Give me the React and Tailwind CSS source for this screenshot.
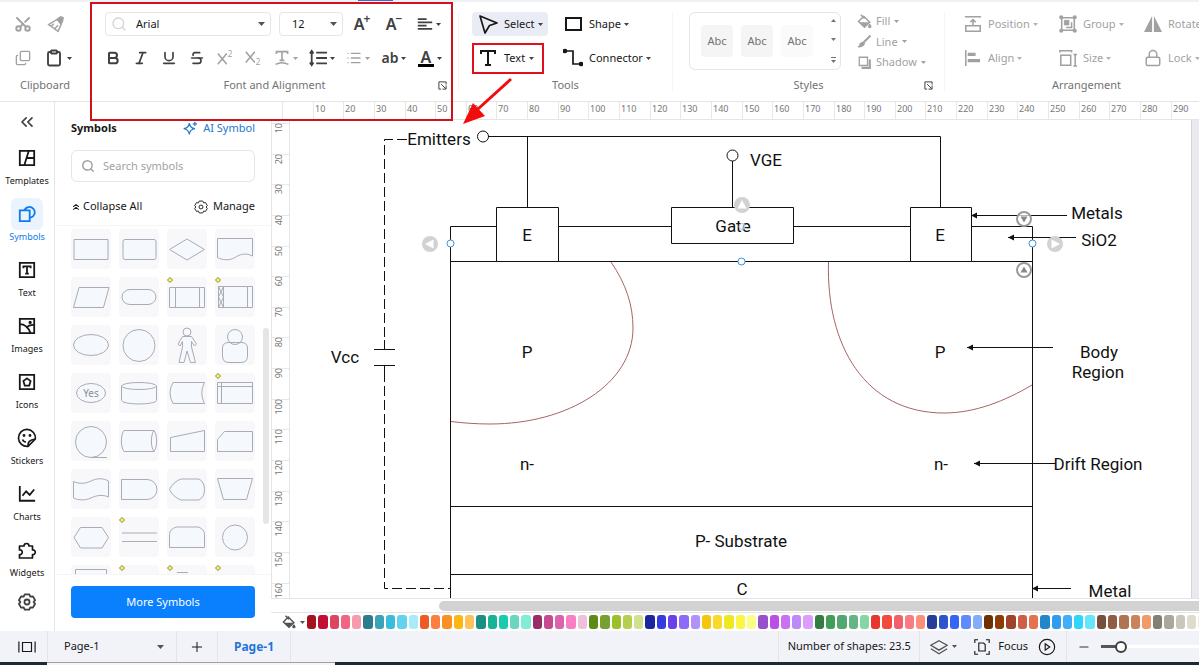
import React, { useState } from 'react';
import {
  Bold, ChevronsLeft, ChevronsUp, Clipboard, Copy, Italic, List, Lock,
  Minus, Plus, Scissors, Search, Strikethrough, Underline,
} from 'lucide-react';

const NAV = ['Templates', 'Symbols', 'Text', 'Images', 'Icons', 'Stickers', 'Charts', 'Widgets'];

const SWATCHES = [
  '#a5131f', '#c40d33', '#dd4663', '#ef6583', '#f79cae', '#2b7d8d', '#3ba2b8', '#3abddb', '#61d3ec', '#a9ebfa',
  '#ee5a26', '#fb803f', '#f89122', '#fdb713', '#fcc35c', '#1a8f82', '#17b395', '#19cbae', '#6ad6bf', '#82ecd4',
  '#972f66', '#c54a8e', '#dc62ac', '#f87fc4', '#efbfde', '#5c8a16', '#76a02f', '#9cbf2c', '#b5cf50', '#d1e18b',
  '#1c269e', '#353bdc', '#6a40ea', '#8d6af8', '#b192fb', '#f5c60c', '#f9da2c', '#ece91e', '#fbf544', '#fbff84',
  '#9650cc', '#bb50e6', '#ca70f2', '#be88fa', '#dc9efc', '#317d42', '#409e56', '#52a672', '#64b486', '#86d6a4',
  '#e8352f', '#f24a3c', '#f0616a', '#fb7a84', '#fd8e7e', '#273e98', '#2e54cc', '#3565f2', '#5f8bfc', '#84adf8',
  '#6d3000', '#8c3a06', '#9e432c', '#cc5f46', '#e47250', '#2287ca', '#2f9cf2', '#43aef8', '#2ed6fc', '#66e6fa',
  '#774f3c', '#905c44', '#ad7352', '#cc835c', '#f09a6a', '#827f74', '#aaa89c', '#cbc8bb', '#dfdccd', '#f2ecd6',
];

// Stencils, each drawn in a 40 x 40 tile
const SHAPES = [
  { d: 'M3 10.5H37V30.5H3Z' },
  { d: 'M6 10.5H35Q37 10.5 37 12.5V28.5Q37 30.5 35 30.5H6Q4 30.5 4 28.5V12.5Q4 10.5 6 10.5Z' },
  { d: 'M20 10L37.500 20.500L20 31L2.500 20.500Z' },
  { d: 'M2.500 9.500H37.500V27C30 23 24 26 20 28.500C14 32 7 31 2.500 28.500Z' },
  { d: 'M8 10.500H38L32.500 30.500H2.500Z' },
  { d: 'M11 12.500H29A8 7.500 0 0 1 29 27.500H11A8 7.500 0 0 1 11 12.500Z' },
  { d: 'M2.500 10.500H37.500V30.500H2.500ZM8.500 10.500V30.500M32.500 10.500V30.500', mark: true },
  { d: 'M3.500 9.500H37.500V30.500H3.500ZM8.500 9.500V30.500M32.500 9.500V30.500M3.500 9.500L8.500 20L3.500 30.500M8.500 9.500L3.500 20L8.500 30.500', mark: true },
  { d: 'M2.500 20A17.500 10.500 0 0 1 37.500 20A17.500 10.500 0 0 1 2.500 20Z' },
  { d: 'M4 20.500A16 16 0 0 1 36 20.500A16 16 0 0 1 4 20.500Z' },
  { d: 'M16 7A4 4 0 0 1 24 7A4 4 0 0 1 16 7ZM15.500 11.500H24.500L29.500 19L27.500 21L24.500 16.500V22L28.500 37.500H23.500L20 26L17 37.500H12L15.500 22V16.500L13 21L11 19Z' },
  { d: 'M13 17.500H27Q32.500 18 32.500 23V31Q32.500 37.500 26 37.500H14Q7.500 37.500 7.500 31V23Q7.500 18 13 17.500ZM12.500 12A7.500 7.500 0 0 1 27.500 12A7.500 7.500 0 0 1 12.500 12Z' },
  { d: 'M5.500 20A14.500 9.500 0 0 1 34.500 20A14.500 9.500 0 0 1 5.500 20Z', label: 'Yes' },
  { d: 'M2.500 13A17.500 3.500 0 0 1 37.500 13V27.500A17.500 3.500 0 0 1 2.500 27.500ZM2.500 13A17.500 3.500 0 0 0 37.500 13' },
  { d: 'M6 9.500H37.500Q32 20 37.500 30.500H6Q0 20 6 9.500Z' },
  { d: 'M2.500 9.500H37.500V30.500H2.500ZM2.500 13.500H37.500M6.500 9.500V30.500', mark: true },
  { d: 'M20 36.500A15.500 15.500 0 1 1 20 5.500A15.500 15.500 0 0 1 20 36.500H36' },
  { d: 'M5 9.500H35C38.500 14 38.500 26 35 30.500H5C1.500 26 1.500 14 5 9.500ZM35 9.500C31.500 14 31.500 26 35 30.500' },
  { d: 'M3.500 16.500L37.500 9.500V30.500H3.500Z' },
  { d: 'M9.500 10.500H37.500V30.500H2.500V18.500Z' },
  { d: 'M2.500 12.500C8 15 14 15 20 12C26 9 32 9 37.500 12V28C32 25.500 26 26 20 29C14 31.500 8 31.500 2.500 29Z' },
  { d: 'M2.500 10.500H28A10 10 0 0 1 28 30.500H2.500Z' },
  { d: 'M14 10H32Q37.500 13 37.500 20.500Q37.500 28 32 31H14Q6 28 2.500 20.500Q6 13 14 10Z' },
  { d: 'M2.500 9.500H37.500L31.500 30.500H8.500Z' },
  { d: 'M9.500 10.500H31L37.500 20.500L31 31H9.500L3 20.500Z' },
  { d: 'M3 16H38M3 24.500H38', mark: true },
  { d: 'M9.500 10H31Q37.500 12 37.500 17.500V30.500H2.500V17.500Q2.500 12 9.500 10Z' },
  { d: 'M7.500 20.500A12.500 12.500 0 0 1 32.500 20.500A12.500 12.500 0 0 1 7.500 20.500Z' },
  { d: 'M4.500 4.500H35.500V34H4.500Z' },
  { d: 'M3 16H37', mark: true },
  { d: 'M10 7.500H21M3 16H37', mark: true },
  { d: 'M3 16H37', mark: true },
];

function Caret({ className = '' }) {
  return (
    <svg viewBox="0 0 5 3" className={`h-[3px] w-[5px] shrink-0 ${className}`} fill="currentColor" aria-hidden="true">
      <path d="M0 0h5L2.500 3z" />
    </svg>
  );
}

function SelectArrow({ className = '' }) {
  return (
    <svg viewBox="0 0 7 4" className={`pointer-events-none h-1 w-[7px] shrink-0 text-neutral-600 ${className}`} fill="currentColor" aria-hidden="true">
      <path d="M0 0h7L3.500 4z" />
    </svg>
  );
}

function Icon({ className = 'size-5', children }) {
  return (
    <svg viewBox="0 0 20 20" className={`shrink-0 ${className}`} fill="none" stroke="currentColor" strokeWidth="1.700" aria-hidden="true">
      {children}
    </svg>
  );
}

const Launcher = () => (
  <button aria-label="More options" className="text-neutral-700">
    <Icon className="size-[9px]">
      <path d="M7 18H2V2h16v6M7 7l10 10M18 10v8h-8" strokeWidth="2.200" />
    </Icon>
  </button>
);

const BucketIcon = ({ className }) => (
  <Icon className={className}>
    <path d="M9 3l8 8-7 6.500-8-7.500zM5 1l5 5" strokeWidth="2" />
    <path d="M3 11h13l-6 6z" fill="currentColor" stroke="none" />
    <path d="M17 14q3 4 0 4t0-4" fill="currentColor" />
  </Icon>
);

const GearIcon = ({ className, strokeWidth }) => (
  <Icon className={className}>
    <g strokeWidth={strokeWidth} strokeLinejoin="round">
      <path d="M7.500 1.500h5l1.200 2.600 2.900-.3L19 8l-1.700 2 1.700 2-2.400 4.200-2.900-.3-1.200 2.600h-5l-1.200-2.600-2.900.3L1 12l1.700-2L1 8l2.400-4.200 2.900.3z" />
      <circle cx="10" cy="10" r="2.800" />
    </g>
  </Icon>
);

function Section({ label, launcher, className = '', children }) {
  return (
    <section className={`relative flex shrink-0 flex-col pt-2.5 ${className}`}>
      {children}
      <h2 className="mt-[7px] text-center text-[11px] leading-4 text-neutral-500">{label}</h2>
      {launcher && <div className="absolute right-[11px] bottom-[11px] flex"><Launcher /></div>}
    </section>
  );
}

const Divider = () => <div className="my-2.5 w-px shrink-0 bg-neutral-100" />;

function IconButton({ label, muted, caret, className = 'w-7', children }) {
  return (
    <button
      aria-label={label}
      className={`flex h-6 shrink-0 items-center justify-center gap-[3px] ${caret ? 'w-9 pl-0.5' : className} ${muted ? 'text-neutral-400' : 'text-neutral-700'}`}
    >
      {children}
      {caret && <Caret />}
    </button>
  );
}

function ToolButton({ label, icon, className = '' }) {
  return (
    <button className={`flex h-6 items-center gap-1.5 ${className}`}>
      {icon}
      <span className="flex items-center gap-[3px]">{label}<Caret className="opacity-80" /></span>
    </button>
  );
}

function Ribbon() {
  return (
    <header className="flex h-[100px] shrink-0 overflow-hidden border-b border-neutral-200 bg-white">
      <Section label="Clipboard" className="w-[90px]">
        <div className="flex flex-col gap-2.5 pl-[7px]">
          <div className="flex">
            <IconButton label="Cut" muted className="w-8"><Scissors className="size-[18px] rotate-270" strokeWidth={2.5} /></IconButton>
            <IconButton label="Format painter" muted className="w-8">
              <Icon className="size-[17px]"><path d="M12 4l5 5-4 9L2 10zM5 12l3-3M9 15l4-4" /><path d="M12 4l4-3 3 1-1 5-2 2z" fill="currentColor" /></Icon>
            </IconButton>
          </div>
          <div className="flex">
            <IconButton label="Copy" muted className="w-8"><Copy className="size-4 -scale-y-100" /></IconButton>
            <button aria-label="Paste" className="flex h-6 items-center gap-1 pl-1.5 text-neutral-700"><Clipboard className="size-[18px]" strokeWidth={2.5} /><Caret /></button>
          </div>
        </div>
      </Section>
      <Divider />
      <Section label="Font and Alignment" launcher className="w-[367px]">
        <div className="flex flex-col gap-2.5">
          <div className="flex items-center pl-3.5">
            <label className="relative mr-2 flex h-6 w-[166px] items-center rounded border border-neutral-200">
              <Search className="ml-[5px] size-4 text-neutral-300" />
              <select aria-label="Font" className="absolute inset-0 appearance-none pl-[30px]"><option>Arial</option></select>
              <SelectArrow className="mr-[5px] ml-auto" />
            </label>
            <label className="relative mr-[3px] flex h-6 w-16 items-center rounded border border-neutral-200">
              <select aria-label="Font size" className="absolute inset-0 appearance-none pl-3"><option>12</option></select>
              <SelectArrow className="mr-[5px] ml-auto" />
            </label>
            <IconButton label="Increase font size" className="w-8"><span className="text-base leading-6 font-semibold">A</span><span className="-ml-1 -mt-2.5 text-xs font-semibold">+</span></IconButton>
            <IconButton label="Decrease font size" className="w-8"><span className="text-base leading-6 font-semibold">A</span><span className="-ml-1 -mt-2.5 text-xs font-semibold">−</span></IconButton>
            <IconButton label="Align text" caret>
              <Icon className="size-4"><path d="M1 4h11M1 8h18M1 12h11M1 16h18" strokeWidth="2.200" /></Icon>
            </IconButton>
          </div>
          <div className="flex items-center pl-2">
            <IconButton label="Bold"><Bold className="size-4" strokeWidth={3} /></IconButton>
            <IconButton label="Italic"><Italic className="size-4" strokeWidth={2.5} /></IconButton>
            <IconButton label="Underline"><Underline className="size-4" strokeWidth={2.5} /></IconButton>
            <IconButton label="Strikethrough"><Strikethrough className="size-4" strokeWidth={2.5} /></IconButton>
            <IconButton label="Superscript" muted>
              <Icon className="size-[18px] overflow-visible"><path d="M2 5l10 12M12 5L2 17" /><text x="13" y="9" fontSize="9" fill="currentColor" stroke="none">2</text></Icon>
            </IconButton>
            <IconButton label="Subscript" muted>
              <Icon className="size-[18px] overflow-visible"><path d="M2 3l10 12M12 3L2 15" /><text x="13" y="18" fontSize="9" fill="currentColor" stroke="none">2</text></Icon>
            </IconButton>
            <IconButton label="Text direction" muted caret>
              <Icon className="size-4"><path d="M3 5V2h14v3M10 2v11M7 13h6M2 18q8-4 16 0" strokeWidth="2" /></Icon>
            </IconButton>
            <IconButton label="Line spacing" caret>
              <Icon className="size-[18px]"><path d="M8 4h12M8 10h12M8 16h12M3 3v14M1 5l2-3 2 3M1 15l2 3 2-3" strokeWidth="2" /></Icon>
            </IconButton>
            <IconButton label="Bullets" muted caret><List className="size-4" /></IconButton>
            <IconButton label="Text case" caret><span className="text-sm leading-6 font-semibold">ab</span></IconButton>
            <IconButton label="Font color" caret>
              <span className="flex h-[17px] w-4 items-center justify-center border-b-[3px] border-black text-base font-semibold">A</span>
            </IconButton>
          </div>
        </div>
      </Section>
      <Divider />
      <Section label="Tools" className="w-[213px]">
        <div className="grid h-[58px] grid-cols-[85px_1fr] items-center gap-y-2.5 pl-[13px]">
          <ToolButton label="Select" className="w-[76px] rounded bg-[#e9ecf5] pl-1.5" icon={<Icon><path d="M2 2l17 7-7.500 2.500L7 19z" strokeLinejoin="round" /></Icon>} />
          <ToolButton label="Shape" className="pl-1.5" icon={<Icon><path d="M3 4h15v12H3z" strokeWidth="2" /></Icon>} />
          <button className="-my-1 flex h-[31px] w-[72px] items-center gap-1.5 border-2 border-[#e0101c] pl-1">
            <Icon><path d="M3 6V3h14v3M10 3v14M7 17h6" strokeWidth="2" /></Icon>
            <span className="flex items-center gap-1">Text<Caret className="opacity-80" /></span>
          </button>
          <ToolButton label="Connector" className="pl-1.5" icon={<Icon><circle cx="2" cy="3" r="1.500" fill="currentColor" /><circle cx="18" cy="16" r="1.500" fill="currentColor" /><path d="M4 3h6v13h7" /></Icon>} />
        </div>
      </Section>
      <Divider />
      <Section label="Styles" launcher className="w-[271px]">
        <div className="flex h-[58px] pl-4">
          <div className="flex h-[58px] w-[152px] items-center gap-2 rounded-md border border-neutral-200 pl-[11px]">
            <button className="size-8 rounded bg-neutral-100 text-neutral-500">Abc</button>
            <button className="size-8 rounded bg-neutral-100 text-neutral-500">Abc</button>
            <button className="size-8 rounded bg-neutral-50 text-neutral-500">Abc</button>
            <div className="ml-1.5 flex flex-col gap-4 pl-1 text-neutral-500">
              <button aria-label="Previous styles"><Caret className="rotate-180" /></button>
              <button aria-label="Next styles"><Caret /></button>
              <button aria-label="All styles" className="border-t border-neutral-500 pt-0.5"><Caret /></button>
            </div>
          </div>
          <div className="ml-4 flex flex-col justify-between pt-px leading-4 text-neutral-400">
            <button className="flex items-center gap-1"><BucketIcon className="size-[15px]" />Fill<Caret /></button>
            <button className="flex items-center gap-1">
              <Icon className="size-[15px]"><path d="M18 2L9 11" strokeWidth="2.500" /><path d="M9 11q2 3-2 5t-5 1q2-1 2-3t5-3z" fill="currentColor" /></Icon>Line<Caret />
            </button>
            <button className="flex items-center gap-1">
              <Icon className="size-[15px]"><path d="M3 3h11v11H3z" /><path d="M17 6v11H6" strokeWidth="3" /></Icon>Shadow<Caret />
            </button>
          </div>
        </div>
      </Section>
      <Divider />
      <Section label="Arrangement" className="w-[283px]">
        <div className="grid grid-cols-[95px_85px_1fr] gap-y-2.5 pl-[19px] whitespace-nowrap text-neutral-400">
          <ToolButton label="Position" icon={<Icon className="size-[18px]"><path d="M1 2h18M2 12h16v6H2zM10 12V5M7 8l3-3 3 3" /></Icon>} />
          <ToolButton label="Group" icon={<Icon className="size-[18px]"><path d="M3 3h14v14H3z" /><path d="M1 1h3v3H1zM16 1h3v3h-3zM1 16h3v3H1zM16 16h3v3h-3zM6 6h5v5H6z" fill="currentColor" strokeWidth="1" /><path d="M8 14h6V8" /></Icon>} />
          <ToolButton label="Rotate" icon={<Icon className="size-[18px]"><path d="M9 1v18H0zM11 1l9 18h-9z" fill="currentColor" strokeWidth="0" /></Icon>} />
          <ToolButton label="Align" icon={<Icon className="size-[18px]"><path d="M2 1v18" /><path d="M5 5h7v2H5zM5 12h12v2H5z" fill="currentColor" /></Icon>} />
          <ToolButton label="Size" icon={<Icon className="size-[18px]"><path d="M2 7h11v11H2zM1 2h13M1 1v3M14 1v3M18 6v13M16 6h4M16 19h4" /></Icon>} />
          <ToolButton label="Lock" icon={<Lock className="size-[18px]" />} />
        </div>
      </Section>
    </header>
  );
}

function NavIcon({ name }) {
  switch (name) {
    case 'Templates':
      return <Icon className="size-[18px]"><path d="M2 2h16v16H2zM7 18l5-16M10 10h8" strokeWidth="2" /></Icon>;
    case 'Symbols':
      return <Icon className="size-[18px]"><path d="M2 6h11v12H2zM7 6a6 6 0 1 1 7 8" strokeWidth="2" /></Icon>;
    case 'Text':
      return <Icon className="size-[18px]"><path d="M2 2h16v16H2z" strokeWidth="2" /><path d="M6 8V6h8v2M10 6v8M8 14h4" strokeWidth="2" /></Icon>;
    case 'Images':
      return <Icon className="size-[18px]"><path d="M2 2h16v16H2zM2 8q8 0 12 10M9 12q4-4 9-3" strokeWidth="2" /><circle cx="13.500" cy="6" r="1" fill="currentColor" /></Icon>;
    case 'Icons':
      return <Icon className="size-[18px]"><path d="M2 2h16v16H2zM10 6l4 3-1.500 5h-5L6 9z" strokeWidth="2" /></Icon>;
    case 'Stickers':
      return (
        <Icon className="size-5">
          <path d="M11 18.400A8.500 8.500 0 1 1 18.400 11L11 18.400Q10 12 18.400 11M5.500 11.500q1 2.500 3.500 2.500" strokeLinejoin="round" />
          <circle cx="7" cy="7.500" r=".6" fill="currentColor" />
          <circle cx="13" cy="7.500" r=".6" fill="currentColor" />
        </Icon>
      );
    case 'Charts':
      return <Icon className="size-[18px]"><path d="M2 1v16.500h17M5 12l4-5 4 4 5-6" strokeWidth="2" /></Icon>;
    default:
      return (
        <Icon className="size-5">
          <path d="M2.500 6H7a2.500 2.500 0 1 1 5 0h3.500v4a2.300 2.300 0 1 1 0 4.500V18h-13v-3.500a2.300 2.300 0 1 0 0-4.500z" strokeLinejoin="round" />
        </Icon>
      );
  }
}

function SideNav() {
  const [active, setActive] = useState('Symbols');
  return (
    <nav className="flex w-[55px] shrink-0 flex-col items-center border-r border-neutral-200 bg-white text-neutral-700">
      <button aria-label="Collapse" className="flex h-10 items-center"><ChevronsLeft className="size-5" /></button>
      {NAV.map((name) => (
        <button
          key={name}
          onClick={() => setActive(name)}
          className={`flex h-14 w-full shrink-0 flex-col items-center text-[9px] leading-[14px] ${name === active ? 'text-[#0a7cf0]' : 'text-neutral-900'}`}
        >
          <span className={`flex size-8 shrink-0 items-center justify-center rounded-md ${name === active ? 'bg-[#eaf3fe]' : ''}`}>
            <NavIcon name={name} />
          </span>
          {name}
        </button>
      ))}
      <button aria-label="Settings" className="flex h-6 items-center"><GearIcon className="size-[18px]" strokeWidth={2} /></button>
    </nav>
  );
}

function SymbolPanel() {
  return (
    <aside className="flex w-[216px] shrink-0 flex-col bg-white">
      <div className="flex h-12 items-center justify-between px-4 pt-1">
        <h2 className="font-bold">Symbols</h2>
        <button className="flex items-center gap-1.5 text-[#2478cc]">
          <Icon className="size-[14px]"><path d="M9 3q1 7 8 8-7 1-8 8-1-7-8-8 7-1 8-8zM17 1v6M14 4h6" /></Icon>
          AI Symbol
        </button>
      </div>
      <label className="mx-4 flex h-8 shrink-0 items-center gap-2 rounded-md border border-neutral-200 px-[9px]">
        <Search className="size-[14px] shrink-0 text-neutral-400" strokeWidth={2.5} />
        <input aria-label="Search symbols" placeholder="Search symbols" className="w-full outline-none placeholder:text-neutral-400" />
      </label>
      <div className="flex h-11 shrink-0 items-center justify-between border-b border-neutral-100 px-4 pt-1.5">
        <button className="flex items-center gap-0.5"><ChevronsUp className="size-2.5 scale-x-125" />Collapse All</button>
        <button className="flex items-center gap-[5px]"><GearIcon className="size-[14px]" strokeWidth={1.3} />Manage</button>
      </div>
      <div className="relative min-h-0 flex-1 overflow-hidden px-4 pt-[3px]">
        <div className="grid grid-cols-4 gap-2">
          {SHAPES.map((shape, i) => (
            <button key={i} aria-label={`Symbol ${i + 1}`} className="size-10 rounded bg-[#f8f8fb]">
              <svg viewBox="0 0 40 40" className="size-10">
                <path d={shape.d} fill="#f5f8fd" stroke="#a9acb3" />
                {shape.mark && <path d="M3 0.500l2.500 2.500L3 5.500.500 3z" fill="#f7f76a" stroke="#8c8c22" />}
                {shape.label && <text x="20" y="24" textAnchor="middle" fontSize="10" fill="#8b8e96">{shape.label}</text>}
              </svg>
            </button>
          ))}
        </div>
        <div className="absolute top-[102px] right-0.5 h-[196px] w-1.5 rounded-full bg-neutral-200" />
      </div>
      <div className="shrink-0 border-t border-neutral-100 px-4 pt-[11px] pb-[13px]">
        <button className="h-8 w-full rounded bg-[#0a80ff] text-white">More Symbols</button>
      </div>
    </aside>
  );
}

const STEP = 30.64;

function TopRuler() {
  return (
    <svg className="h-[18px] w-full shrink-0 border-b border-neutral-200 bg-white" fontSize="9" fill="#777">
      {Array.from({ length: 30 }, (_, i) => (
        <g key={i} transform={`translate(${Math.round(11 + i * STEP)} 0)`}>
          <path d="M.500 0V18" stroke="#e8e8ea" />
          {i > 0 && <text x="2" y="10">{i * 10}</text>}
        </g>
      ))}
    </svg>
  );
}

function SideRuler() {
  return (
    <svg className="h-full w-[19px] shrink-0 border-x border-neutral-200 bg-white" fontSize="9" fill="#777">
      {Array.from({ length: 16 }, (_, i) => (
        <g key={i} transform={`translate(0 ${Math.round(3 + i * STEP)})`}>
          <path d="M0 .500H18" stroke="#e8e8ea" />
          <text transform="rotate(-90)" x="0" y="10" textAnchor="end">{(i + 1) * 10}</text>
        </g>
      ))}
    </svg>
  );
}

const LABELS = [
  [439, 145, 'Emitters'], [766, 166, 'VGE'], [527, 241, 'E'], [733, 232, 'Gate'], [940, 241, 'E'],
  [1097, 219, 'Metals'], [1099, 246, 'SiO2'], [527, 358, 'P'], [940, 358, 'P'], [345, 363, 'Vcc'],
  [1099, 358, 'Body'], [1098, 378, 'Region'], [527, 470, 'n-'], [941, 470, 'n-'], [1098, 470, 'Drift Region'],
  [741, 547, 'P- Substrate'], [742, 595, 'C'], [1110, 597, 'Metal'],
];

const POINTERS = [[971, 1067, 215.5], [1008, 1076, 237.5], [967, 1053, 347.5], [974, 1056, 463.5], [1032, 1071, 588.5]];

function Diagram() {
  return (
    <svg className="size-full" fill="none" stroke="#111" role="img" aria-label="IGBT structure">
      <g transform="translate(-290 -120)">
        <path d="M407 139.500H384.500V343M384.500 372V588.500H450" strokeDasharray="10 4" />
        <path d="M374 349.500H395M374 365.500H395M384.500 340V349M384.500 365V376" />
        <path d="M488 136.500H940.500V207M527.500 136.500V207M732.500 161V207" />
        <circle cx="483" cy="136.500" r="5.500" />
        <circle cx="732.500" cy="155.500" r="5.500" />
        <path d="M450.500 610V226.500H1032.500V610M450.500 261.500H1032.500M450.500 506.500H1032.500M450.500 574.500H1032.500" />
        <path d="M496.500 207.500H558.500V261.500H496.500ZM671.500 207.500H793.500V243.500H671.500ZM910.500 207.500H971.500V261.500H910.500Z" fill="#fff" />
        <path d="M611 262C626 284 633 305 633 328C633 384 568 424 490 424C476 424 463 423 451 421.500" stroke="#a66463" />
        <path d="M828.500 262C826 345 865 413 944 413C975 413 1005 401 1032 385" stroke="#a66463" />
        {POINTERS.map(([x1, x2, y]) => (
          <g key={y}>
            <path d={`M${x1} ${y}H${x2}`} />
            <path d={`M${x1} ${y}l6 -3v6z`} fill="#111" stroke="none" />
          </g>
        ))}
        <g fill="#111" stroke="none" fontSize="17" textAnchor="middle" fontFamily="Roboto, sans-serif">
          {LABELS.map(([x, y, text]) => <text key={`${x}-${y}`} x={x} y={y}>{text}</text>)}
        </g>
        {/* quick-connect handles */}
        <g stroke="none">
          {[[742, 205, 0], [430, 244, -90], [1055, 244, 90]].map(([x, y, turn]) => (
            <g key={x} transform={`translate(${x} ${y}) rotate(${turn})`}>
              <circle r="8" fill="#d2d2d2" />
              <path d="M0 -5L4.500 3.500H-4.500Z" fill="#fff" />
            </g>
          ))}
        </g>
        {[[219, 180], [270, 0]].map(([y, turn]) => (
          <g key={y} transform={`translate(1024 ${y}) rotate(${turn})`}>
            <circle r="7" fill="#fff" fillOpacity=".7" stroke="#9a9a9a" strokeWidth="2" />
            <path d="M0 -3.500L3.500 2.500H-3.500Z" fill="#888" stroke="none" />
          </g>
        ))}
        <g stroke="#3e8fd0" fill="#fff">
          <circle cx="450.500" cy="243.500" r="3.500" />
          <circle cx="741.500" cy="261.500" r="3.500" />
          <circle cx="1032.500" cy="243.500" r="3.500" />
          <circle cx="742" cy="226.500" r="3" stroke="#9cc8f0" fillOpacity=".6" />
        </g>
      </g>
    </svg>
  );
}

function ColorBar() {
  return (
    <div className="flex h-[19px] shrink-0 items-center border-t border-neutral-200 bg-white">
      <button aria-label="Fill color" className="flex w-9 shrink-0 items-center gap-1 pl-[11px] text-neutral-600"><BucketIcon className="size-[14px]" /><Caret /></button>
      <div className="-mr-2 flex flex-1 gap-0.5">
        {SWATCHES.map((color) => (
          <button key={color} aria-label={color} className="h-3.5 flex-1 rounded-[3px]" style={{ backgroundColor: color }} />
        ))}
      </div>
    </div>
  );
}

const StatusDivider = () => <div className="h-full w-px shrink-0 bg-neutral-200" />;

function StatusBar() {
  return (
    <footer className="flex h-[31px] shrink-0 items-center overflow-hidden bg-[#f1f3f9]">
      <button aria-label="Toggle pages" className="flex w-[47px] shrink-0 justify-center pl-1.5">
        <Icon className="size-[18px]"><path d="M1 4v12M19 4v12M5 5h10v10H5z" strokeWidth="1.300" /></Icon>
      </button>
      <StatusDivider />
      <label className="relative flex h-full w-32 shrink-0 items-center">
        <select aria-label="Page" className="absolute inset-0 appearance-none pl-4"><option>Page-1</option></select>
        <SelectArrow className="mr-3 ml-auto" />
      </label>
      <StatusDivider />
      <button aria-label="Add page" className="flex w-10 shrink-0 justify-center"><Plus className="size-4" strokeWidth={1.5} /></button>
      <StatusDivider />
      <button className="w-[72px] shrink-0 text-xs font-bold text-[#1f75d8]">Page-1</button>
      <StatusDivider />
      <div className="ml-auto flex h-full shrink-0 items-center">
        <StatusDivider />
        <span className="w-[140px] text-center">Number of shapes: 23.5</span>
        <StatusDivider />
        <button aria-label="Layers" className="ml-2.5 flex w-9 items-center gap-1 text-neutral-600">
          <Icon className="size-[18px]"><path d="M10 3l9 5-9 5.500L1 8zM1 12l9 5.500 9-5.500" strokeWidth="1.400" /></Icon>
          <Caret />
        </button>
        <button className="ml-2 flex items-center gap-2">
          <Icon className="size-4"><path d="M1 5V1h4M15 1h4v4M19 15v4h-4M5 19H1v-4M6 5h6l2 2v8H6z" strokeWidth="1.400" /></Icon>
          Focus
        </button>
        <button aria-label="Present" className="mr-2.5 ml-2.5">
          <Icon className="size-[18px]"><circle cx="10" cy="10" r="8.500" strokeWidth="1.300" /><path d="M8 6.500l5 3.500-5 3.500z" strokeWidth="1.300" /></Icon>
        </button>
        <StatusDivider />
        <button aria-label="Zoom out" className="mx-2.5"><Minus className="size-3.5" strokeWidth={1.5} /></button>
        <input
          type="range"
          aria-label="Zoom"
          defaultValue="16"
          className="h-3 w-[98px] appearance-none bg-[linear-gradient(90deg,#555_20%,#fff_20%)] bg-[length:100%_3px] bg-center bg-no-repeat [&::-webkit-slider-thumb]:size-3 [&::-webkit-slider-thumb]:appearance-none [&::-webkit-slider-thumb]:rounded-full [&::-webkit-slider-thumb]:border-2 [&::-webkit-slider-thumb]:border-neutral-700 [&::-webkit-slider-thumb]:bg-white"
        />
      </div>
    </footer>
  );
}

export default function App() {
  return (
    <div className="relative flex h-screen flex-col overflow-hidden bg-white font-['Noto_Sans',sans-serif] text-[11px] text-neutral-900">
      <div className="flex h-0.5 shrink-0 bg-[#f0f1f4] pl-[358px]">
        <div className="h-px w-[35px] bg-[#4a63c8]" />
      </div>
      <Ribbon />
      <div className="flex min-h-0 flex-1">
        <SideNav />
        <SymbolPanel />
        <main className="flex min-w-0 flex-1 flex-col">
          <TopRuler />
          <div className="flex min-h-0 flex-1">
            <SideRuler />
            <div className="min-w-0 flex-1 bg-white"><Diagram /></div>
            <div className="w-2 shrink-0 border-l border-neutral-300 bg-[#e9eaf0]" />
          </div>
          <div className="h-[14px] shrink-0 border-t border-neutral-200 pt-0.5 pl-[168px]">
            <div className="h-2.5 rounded-l-full bg-[#d2d2d3]" />
          </div>
          <ColorBar />
        </main>
      </div>
      <StatusBar />
      <div className="flex h-[3px] shrink-0 bg-[#1c2b31]">
        <div className="ml-[47px] w-[288px] border-t border-neutral-400 bg-neutral-100" />
      </div>

      {/* Callout over the font tools */}
      <div className="pointer-events-none absolute top-0.5 left-[90px] h-[119px] w-[363px] border-2 border-[#d0121b]" />
      <svg className="pointer-events-none absolute top-[76px] left-[460px] h-[50px] w-[54px]" fill="#f20d0d">
        <path d="M51 3L18 33" stroke="#f20d0d" strokeWidth="3" />
        <path d="M3 48L13 27L25 40Z" />
      </svg>
    </div>
  );
}
